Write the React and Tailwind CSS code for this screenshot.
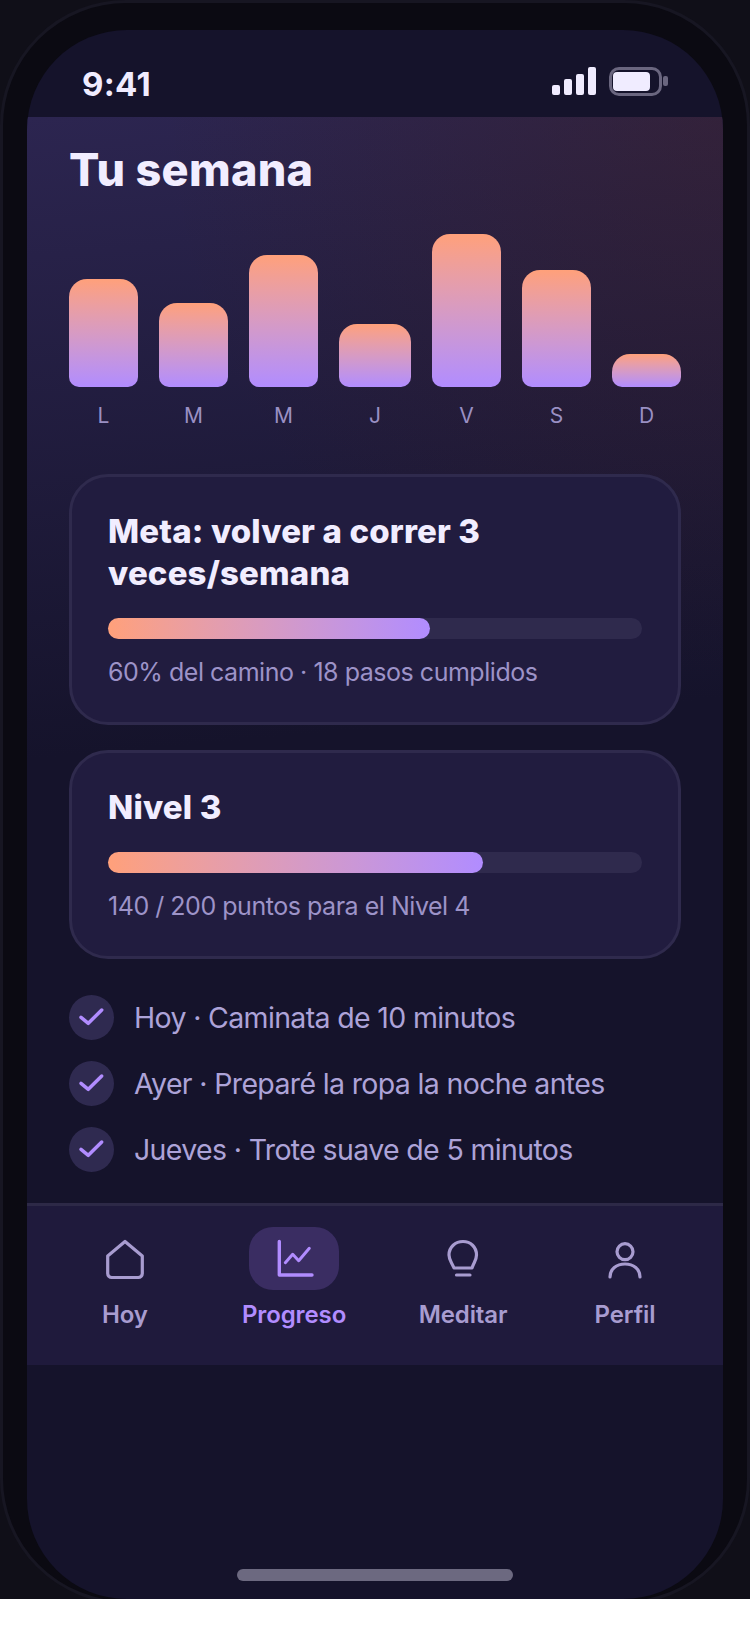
const BARS = [
  { day: "L", h: "h-[108px]" },
  { day: "M", h: "h-[84px]" },
  { day: "M", h: "h-[132px]" },
  { day: "J", h: "h-[63px]", wide: true },
  { day: "V", h: "h-[153px]" },
  { day: "S", h: "h-[117px]" },
  { day: "D", h: "h-[33px]" },
];

const LOG = [
  "Hoy · Caminata de 10 minutos",
  "Ayer · Preparé la ropa la noche antes",
  "Jueves · Trote suave de 5 minutos",
];

function StatusBar() {
  return (
    <div className="h-[87px] shrink-0 flex items-center justify-between pt-[21px] pl-[55px] pr-[55px]">
      <span className="text-[33px] leading-none font-bold tracking-[0.3px] text-[#f0ecff]">9:41</span>
      <div className="flex items-center gap-[13px] pb-[6px]">
        <div className="flex items-end gap-[4px] h-[28px]">
          <div className="w-[8px] h-[10px] rounded-[2px] bg-[#f0ecff]" />
          <div className="w-[8px] h-[16px] rounded-[2px] bg-[#f0ecff]" />
          <div className="w-[8px] h-[21px] rounded-[2px] bg-[#f0ecff]" />
          <div className="w-[8px] h-[28px] rounded-[2px] bg-[#f0ecff]" />
        </div>
        <div className="flex items-center gap-[1px]">
          <div className="w-[53px] h-[29px] rounded-[10px] border-[3px] border-[#6a667f] pl-[1px] flex items-center">
            <div className="w-[37px] h-[19px] rounded-[4px] bg-[#f0ecff]" />
          </div>
          <div className="w-[5px] h-[10px] rounded-[2px] bg-[#6a667f]" />
        </div>
      </div>
    </div>
  );
}

function Chart() {
  return (
    <div className="flex justify-between mt-[37px]">
      {BARS.map((b, i) => (
        <div key={i} className={`flex flex-col items-center ${b.wide ? "w-[72px]" : "w-[69px]"}`}>
          <div className="h-[153px] w-full flex items-end">
            <div className={`w-full ${b.h} rounded-t-[18px] rounded-b-[10px] bg-gradient-to-b from-[#ffa07a] to-[#b18cff]`} />
          </div>
          <span className="mt-[16px] text-[21px] leading-[26px] text-[#9a90c4]">{b.day}</span>
        </div>
      ))}
    </div>
  );
}

function ProgressCard({ title, bar, note }) {
  return (
    <div className="rounded-[39px] border-[3px] border-[#2f2a4d] bg-[#211c3f] px-[36px] pt-[33px] pb-[32px]">
      <h2 className="text-[33px] leading-[42px] font-extrabold tracking-[0.15px] text-[#f1edff]">{title}</h2>
      <div className="mt-[24px] h-[21px] rounded-full bg-[#2f2a4d]">
        <div className={`h-full rounded-full bg-gradient-to-r from-[#ffa07a] to-[#b18cff] ${bar}`} />
      </div>
      <p className="mt-[15px] text-[25px] leading-[36px] tracking-[-0.47px] text-[#9d93c8]">{note}</p>
    </div>
  );
}

function HomeIcon() {
  return (
    <svg viewBox="0 0 90 63" className="w-full h-full" fill="none" stroke="#a89cd0" strokeWidth="3.2" strokeLinejoin="round" strokeLinecap="round">
      <path d="M45 14.5 L62.3 29 V46.5 a4 4 0 0 1 -4 4 H31.7 a4 4 0 0 1 -4 -4 V29 Z" />
    </svg>
  );
}

function ChartIcon() {
  return (
    <svg viewBox="0 0 90 63" className="w-full h-full" fill="none" stroke="#b18cff" strokeLinejoin="round" strokeLinecap="round">
      <path d="M30.3 14.5 V48 H63" strokeWidth="3.4" />
      <path d="M36.3 35.7 L43.7 27.3 L49.7 33.7 L60.3 21.3" strokeWidth="3" />
    </svg>
  );
}

function BulbIcon() {
  return (
    <svg viewBox="0 0 90 63" className="w-full h-full" fill="none" stroke="#a89cd0" strokeWidth="3.2" strokeLinejoin="round" strokeLinecap="round">
      <path d="M36 41 C33.5 35 31 33 31 28 C31 20 37.5 14.5 45 14.5 C52.5 14.5 58.5 20 58.5 28 C58.5 33 56 35 54 41 Z" />
      <path d="M38.5 48 H52" />
    </svg>
  );
}

function PersonIcon() {
  return (
    <svg viewBox="0 0 90 63" className="w-full h-full" fill="none" stroke="#a89cd0" strokeWidth="3.2" strokeLinecap="round">
      <circle cx="45" cy="24.7" r="8" />
      <path d="M30 50 C30 42 36.5 37 45 37 C53.5 37 60 42 60 50" />
    </svg>
  );
}

const NAV = [
  { label: "Hoy", icon: HomeIcon },
  { label: "Progreso", icon: ChartIcon, active: true },
  { label: "Meditar", icon: BulbIcon },
  { label: "Perfil", icon: PersonIcon },
];

function BottomNav() {
  return (
    <div className="h-[162px] shrink-0 border-t-[3px] border-[#2d2947] bg-[#1f1a3c] px-[17px] pt-[21px] flex justify-around">
      {NAV.map((n) => {
        const Icon = n.icon;
        return (
          <div key={n.label} className="min-w-[90px] flex flex-col items-center">
            <div className={`w-[90px] h-[63px] rounded-[24px] ${n.active ? "bg-[#3a2d62]" : ""}`}>
              <Icon />
            </div>
            <span className={`mt-[9px] text-[24px] leading-[32px] font-semibold tracking-[-0.1px] whitespace-nowrap ${n.active ? "text-[#b18cff]" : "text-[#a89cd0]"}`}>
              {n.label}
            </span>
          </div>
        );
      })}
    </div>
  );
}

export default function App() {
  return (
    <div className="w-[750px] h-[1599px] overflow-hidden bg-[#100f18] font-['Inter',sans-serif]">
      <div className="h-[1604px] rounded-[126px] border-[3px] border-[#171622] bg-[#0b0a12] pt-[27px] px-[24px]">
        <div className="h-[1569px] rounded-[100px] overflow-hidden bg-[#15132b] flex flex-col">
          <StatusBar />

          <div className="h-[1086px] shrink-0 px-[42px] pt-[26px] bg-[radial-gradient(circle_at_100%_0%,rgba(70,30,20,0.32)_0px,rgba(70,30,20,0.16)_280px,transparent_560px),linear-gradient(175deg,#2c2550_0px,#15132b_640px)]">
            <h1 className="text-[45px] leading-[54px] font-extrabold tracking-[0.3px] text-[#f1edff]">Tu semana</h1>
            <Chart />

            <div className="mt-[45px] flex flex-col gap-[25px]">
              <ProgressCard title="Meta: volver a correr 3 veces/semana" bar="w-[60.3%]" note="60% del camino · 18 pasos cumplidos" />
              <ProgressCard title="Nivel 3" bar="w-[70.3%]" note="140 / 200 puntos para el Nivel 4" />
            </div>

            <ul className="mt-[36px] flex flex-col gap-[21px]">
              {LOG.map((t) => (
                <li key={t} className="flex items-center gap-[20px]">
                  <span className="w-[45px] h-[45px] rounded-full bg-[#2f2a50] shrink-0">
                    <svg viewBox="0 0 45 45" className="w-full h-full" fill="none" stroke="#b18cff" strokeWidth="3.5" strokeLinecap="round" strokeLinejoin="round">
                      <path d="M12 22.3 L19.3 28.3 L32.7 15" />
                    </svg>
                  </span>
                  <span className="text-[28.5px] leading-[40px] tracking-[-0.65px] text-[#ada3d8] whitespace-nowrap">{t}</span>
                </li>
              ))}
            </ul>
          </div>

          <BottomNav />

          <div className="flex-1 flex items-end justify-center pb-[18px]">
            <div className="w-[276px] h-[12px] rounded-full bg-[#6c6980]" />
          </div>
        </div>
      </div>
    </div>
  );
}
